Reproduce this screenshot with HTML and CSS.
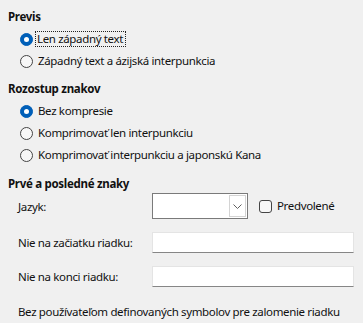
FILE: index.html
```html
<!DOCTYPE html>
<html lang="sk">
<head>
<meta charset="utf-8">
<link rel="stylesheet" href="styles.css">
</head>
<body>
<div class="page">
  <div class="heading h1">Previs</div>
  <div class="row radio-row"><span class="radio on"></span><span class="label focus">Len západný text</span></div>
  <div class="row radio-row"><span class="radio"></span><span class="label">Západný text a ázijská interpunkcia</span></div>

  <div class="heading h2">Rozostup znakov</div>
  <div class="row radio-row"><span class="radio on"></span><span class="label">Bez kompresie</span></div>
  <div class="row radio-row"><span class="radio"></span><span class="label">Komprimovať len interpunkciu</span></div>
  <div class="row radio-row"><span class="radio"></span><span class="label">Komprimovať interpunkciu a japonskú Kana</span></div>

  <div class="heading h3">Prvé a posledné znaky</div>
  <div class="row field-row lang-row">
    <span class="flabel">Jazyk:</span>
    <span class="combo"><span class="combo-btn"><svg width="9" height="5" viewBox="0 0 9 5"><path d="M0.5 0.5 L4.5 4.5 L8.5 0.5" fill="none" stroke="#606060" stroke-width="1"/></svg></span></span>
    <span class="check"></span><span class="label">Predvolené</span>
  </div>
  <div class="row field-row input-row">
    <span class="flabel">Nie na začiatku riadku:</span>
    <span class="input"></span>
  </div>
  <div class="row field-row input-row">
    <span class="flabel">Nie na konci riadku:</span>
    <span class="input"></span>
  </div>
  <div class="row note">Bez používateľom definovaných symbolov pre zalomenie riadku</div>
</div>
</body>
</html>
```
FILE: styles.css
```css
html, body {
  margin: 0;
  padding: 0;
  background: #f0f0f0;
}
body {
  width: 363px;
  height: 323px;
  overflow: hidden;
  font-family: "Noto Sans", "Open Sans", sans-serif;
  font-size: 11.5px;
  letter-spacing: -0.35px;
  color: #111;
}
.page {
  display: flex;
  flex-direction: column;
  padding: 6px 0 0 8px;
}
.heading {
  height: 22px;
  line-height: 22px;
  font-weight: bold;
  letter-spacing: -0.3px;
}
.h2 { margin-top: 6px; }
.h3 { margin-top: 7px; }
.row {
  display: flex;
  align-items: center;
}
.radio-row {
  height: 22px;
  padding-left: 12px;
}
.radio {
  width: 11px;
  height: 11px;
  border: 1px solid #444;
  border-radius: 50%;
  box-sizing: content-box;
  margin-right: 5px;
  background: #f7f7f7;
  flex: none;
}
.radio.on {
  background: #005fb8;
  border-color: #005fb8;
  position: relative;
}
.radio.on::after {
  content: "";
  position: absolute;
  left: 3px;
  top: 3px;
  width: 5px;
  height: 5px;
  border-radius: 50%;
  background: #fff;
}
.label {
  white-space: nowrap;
  line-height: 14px;
}
.focus {
  outline: 1px dotted #222;
  outline-offset: 0;
  padding: 0 2px 0 1px;
  margin-left: -2px;
}
.field-row {
  padding-left: 10px;
}
.flabel {
  width: 134px;
  flex: none;
  white-space: nowrap;
}
.lang-row { height: 24px; margin-top: -1px; }
.combo {
  width: 92px;
  height: 22px;
  border: 1px solid #7a7a7a;
  background: #fff;
  display: flex;
  justify-content: flex-end;
  align-items: stretch;
  padding: 1px;
  box-sizing: content-box;
  margin-right: 11px;
}
.combo-btn {
  width: 15px;
  border: 1px solid #d4d4d4;
  background: #fff;
  display: flex;
  align-items: center;
  justify-content: center;
}
.check {
  width: 11px;
  height: 11px;
  border: 1px solid #444;
  border-radius: 3px;
  background: #f7f7f7;
  margin-right: 5px;
  flex: none;
}
.input-row {
  height: 22px;
  margin-top: 13px;
}
.input {
  width: 200px;
  height: 19px;
  background: #fff;
  border: 1px solid #e4e4e4;
  border-bottom-color: #868686;
}
.input-row + .input-row { margin-top: 12px; }
.note {
  height: 22px;
  margin-top: 13px;
  padding-left: 10px;
  white-space: nowrap;
}
```
